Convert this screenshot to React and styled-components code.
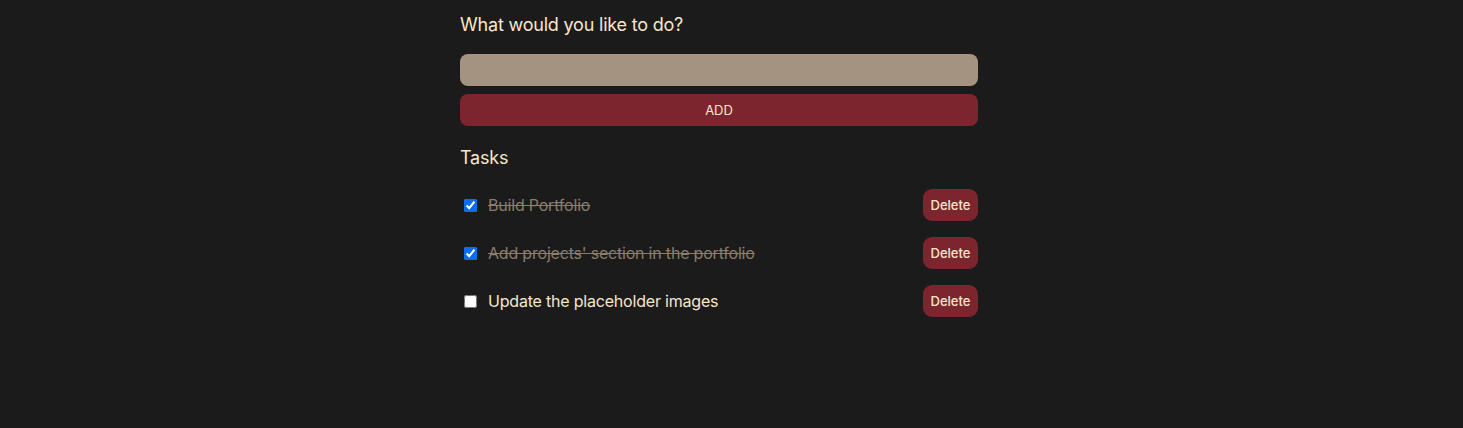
import React, { useState } from "react";
import styled, { createGlobalStyle } from "styled-components";

const Global = createGlobalStyle`
  html, body { margin: 0; padding: 0; background: #1b1b1b; }
  body { font-family: Inter, "Noto Sans", sans-serif; color: #f8e6cb; }
`;

const Page = styled.div`
  display: flex;
  justify-content: center;
  padding: 12px 25px 0 0;
  min-height: 428px;
  box-sizing: border-box;
`;

const Container = styled.div`
  width: 518px;
  display: flex;
  flex-direction: column;
`;

const Title = styled.h1`
  margin: 0 0 16px;
  font-size: 18px;
  font-weight: 400;
  line-height: 26px;
  letter-spacing: -0.2px;
  color: #f8e6cb;
`;

const Input = styled.input`
  height: 32px;
  border: none;
  border-radius: 8px;
  background: #a49381;
  padding: 0 12px;
  font: inherit;
  outline: none;
  margin-bottom: 8px;
`;

const AddButton = styled.button`
  height: 32px;
  border: none;
  border-radius: 8px;
  background: #7c252f;
  color: #f8e6cb;
  font-family: Inter, sans-serif;
  font-size: 13px;
  cursor: pointer;
`;

const SubTitle = styled.h2`
  margin: 20px 0 19px;
  font-size: 18px;
  font-weight: 400;
  line-height: 24px;
  letter-spacing: -0.2px;
  color: #f8e6cb;
`;

const List = styled.ul`
  list-style: none;
  margin: 0;
  padding: 0;
  display: flex;
  flex-direction: column;
  gap: 16px;
`;

const Row = styled.li`
  display: flex;
  align-items: center;
  height: 32px;
`;

const Check = styled.input`
  width: 13px;
  height: 13px;
  margin: 0 11px 0 4px;
  accent-color: #0b6cf5;
`;

const Label = styled.span`
  flex: 1;
  font-size: 16px;
  letter-spacing: -0.2px;
  color: ${(p) => (p.$done ? "#8a7d6c" : "#f8e6cb")};
  text-decoration: ${(p) => (p.$done ? "line-through" : "none")};
`;

const DeleteButton = styled.button`
  height: 32px;
  width: 55px;
  border: none;
  border-radius: 9px;
  background: #7c252f;
  color: #f8e6cb;
  font-family: Inter, sans-serif;
  font-size: 13px;
  font-weight: 500;
  padding: 0;
  cursor: pointer;
`;

export default function App() {
  const [tasks, setTasks] = useState([
    { id: 1, text: "Build Portfolio", done: true },
    { id: 2, text: "Add projects' section in the portfolio", done: true },
    { id: 3, text: "Update the placeholder images", done: false },
  ]);
  const [value, setValue] = useState("");

  return (
    <>
      <Global />
      <Page>
        <Container>
          <Title>What would you like to do?</Title>
          <Input value={value} onChange={(e) => setValue(e.target.value)} />
          <AddButton
            onClick={() => {
              if (!value.trim()) return;
              setTasks([...tasks, { id: Date.now(), text: value, done: false }]);
              setValue("");
            }}
          >
            ADD
          </AddButton>
          <SubTitle>Tasks</SubTitle>
          <List>
            {tasks.map((t) => (
              <Row key={t.id}>
                <Check
                  type="checkbox"
                  checked={t.done}
                  onChange={() =>
                    setTasks(tasks.map((x) => (x.id === t.id ? { ...x, done: !x.done } : x)))
                  }
                />
                <Label $done={t.done}>{t.text}</Label>
                <DeleteButton onClick={() => setTasks(tasks.filter((x) => x.id !== t.id))}>
                  Delete
                </DeleteButton>
              </Row>
            ))}
          </List>
        </Container>
      </Page>
    </>
  );
}
